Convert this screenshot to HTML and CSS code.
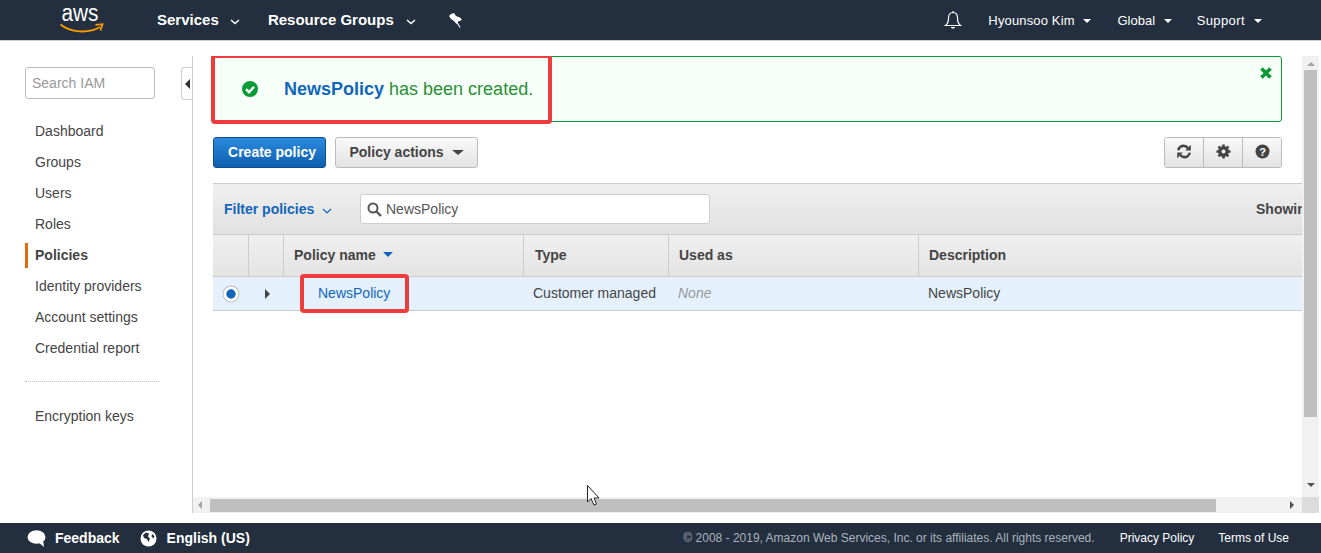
FILE: index.html
```html
<!DOCTYPE html>
<html lang="en">
<head>
<meta charset="utf-8">
<title>IAM Policies</title>
<link rel="stylesheet" href="styles.css">
</head>
<body>
<header class="topbar">
  <svg class="aws-logo" width="44" height="40" viewBox="0 0 44 40"><text x="1.500" y="21" class="aws-word" textLength="37" lengthAdjust="spacingAndGlyphs">aws</text><path d="M0.500 24.500C10 32.500 28 34 40 27" fill="none" stroke="#f90" stroke-width="1.900"/><path d="M35.500 24.800L42.500 24.200L40.500 30.500" fill="none" stroke="#f90" stroke-width="1.800"/></svg>
  <nav class="nav-left">
    <a class="nav-main nav-services">Services <svg class="chev" width="10" height="6" viewBox="0 0 10 6"><path d="M1 1l4 3.500L9 1" fill="none" stroke="#fff" stroke-width="1.500"/></svg></a>
    <a class="nav-main">Resource Groups <svg class="chev" width="10" height="6" viewBox="0 0 10 6"><path d="M1 1l4 3.500L9 1" fill="none" stroke="#fff" stroke-width="1.500"/></svg></a>
    <svg class="pin" width="15" height="15" viewBox="0 0 15 15"><path d="M3 1L6 0L8 3L12 4.500L14 7L10 8.500L8.500 11L6 8L3 6L1 3z" fill="#fff"/><path d="M8.500 8.500L12 14.500" stroke="#fff" stroke-width="1.100"/></svg>
  </nav>
  <nav class="nav-right">
    <svg class="bell" width="18" height="19" viewBox="0 0 18 19"><path d="M9 1.500c-3 0-4.500 2.500-4.500 5.500 0 3-1 6-3 7.500h15c-2-1.500-3-4.500-3-7.500 0-3-1.500-5.500-4.500-5.500z" fill="none" stroke="#fff" stroke-width="1.200"/><path d="M7 16h4c0 2-4 2-4 0z" fill="#fff"/><circle cx="9" cy="1.200" r="1" fill="#fff"/></svg>
    <a class="nav-sub nav-user">Hyounsoo Kim <i class="caret-w"></i></a>
    <a class="nav-sub nav-global">Global <i class="caret-w"></i></a>
    <a class="nav-sub nav-support">Support <i class="caret-w"></i></a>
  </nav>
</header>

<div class="main">
  <aside class="sidebar">
    <div class="search-iam">Search IAM</div>
    <ul class="side-list">
      <li>Dashboard</li>
      <li>Groups</li>
      <li>Users</li>
      <li>Roles</li>
      <li class="active">Policies</li>
      <li>Identity providers</li>
      <li>Account settings</li>
      <li>Credential report</li>
    </ul>
    <div class="side-rule"></div>
    <ul class="side-list">
      <li>Encryption keys</li>
    </ul>
    <div class="collapse-tab"><i></i></div>
  </aside>

  <section class="panel">
    <div class="viewport">
      <div class="flash">
        <svg class="flash-check" width="18" height="18" viewBox="0 0 18 18"><circle cx="9" cy="9" r="8" fill="#0a9b38"/><path d="M5 9.200l3 3 5-5.500" fill="none" stroke="#fff" stroke-width="2.400"/></svg>
        <p class="flash-text"><b>NewsPolicy</b> has been created.</p>
        <svg class="flash-close" width="12" height="12" viewBox="0 0 12 12"><path d="M1.500 1.500l9 9M10.500 1.500l-9 9" stroke="#0a9b38" stroke-width="3.600"/></svg>
      </div>

      <div class="actions">
        <button class="btn btn-primary">Create policy</button>
        <button class="btn btn-secondary">Policy actions <i class="caret-d"></i></button>
        <div class="icon-group">
          <button class="icon-btn"><svg width="16" height="15" viewBox="0 0 16 15"><path d="M2.200 6.200C3 3 6 1.500 8.500 2c1.500.3 2.500 1 3.300 2" fill="none" stroke="#444" stroke-width="2.600"/><path d="M14.800 .8v5.600H9.200z" fill="#444"/><path d="M13.800 8.800C13 12 10 13.500 7.500 13c-1.500-.3-2.500-1-3.300-2" fill="none" stroke="#444" stroke-width="2.600"/><path d="M1.200 14.200V8.600h5.600z" fill="#444"/></svg></button>
          <button class="icon-btn"><svg width="15" height="15" viewBox="0 0 15 15"><circle cx="7.500" cy="7.500" r="3.700" fill="none" stroke="#444" stroke-width="3.400"/><path d="M7.500 0.500v14M0.500 7.500h14M2.500 2.500l10 10M12.500 2.500l-10 10" stroke="#444" stroke-width="2.600" stroke-dasharray="2.500 9 2.500"/></svg></button>
          <button class="icon-btn"><svg width="15" height="15" viewBox="0 0 15 15"><circle cx="7.500" cy="7.500" r="7" fill="#444"/><text x="7.500" y="11.500" class="help-mark">?</text></svg></button>
        </div>
      </div>

      <div class="table-wrap">
        <div class="filter-bar">
          <a class="filter-link">Filter policies <svg class="filter-chev" width="10" height="6" viewBox="0 0 10 6"><path d="M1 1l4 4 4-4" fill="none" stroke="#16b" stroke-width="1.200"/></svg></a>
          <div class="filter-input">
            <svg width="15" height="15" viewBox="0 0 15 15"><circle cx="6" cy="6" r="4.500" fill="none" stroke="#555" stroke-width="2"/><path d="M9.500 9.500l4.500 4.500" stroke="#555" stroke-width="2.400"/></svg>
            <span>NewsPolicy</span>
          </div>
          <span class="showing">Showing 1 result</span>
        </div>
        <div class="row head-row">
          <div class="cell c-radio"></div>
          <div class="cell c-expand"></div>
          <div class="cell c-name">Policy name <i class="caret-blue"></i></div>
          <div class="cell c-type">Type</div>
          <div class="cell c-used">Used as</div>
          <div class="cell c-desc">Description</div>
        </div>
        <div class="row body-row">
          <div class="cell c-radio"><span class="radio"></span></div>
          <div class="cell c-expand"><i class="caret-r"></i></div>
          <div class="cell c-name"><a class="policy-link">NewsPolicy</a></div>
          <div class="cell c-type">Customer managed</div>
          <div class="cell c-used none">None</div>
          <div class="cell c-desc">NewsPolicy</div>
        </div>
      </div>

      <div class="annot annot-flash"></div>
      <div class="annot annot-row"></div>
    </div>

    <div class="vscroll">
      <i class="arrow-up"></i>
      <div class="v-thumb"></div>
      <i class="arrow-down"></i>
    </div>
    <div class="hscroll">
      <i class="arrow-left"></i>
      <div class="h-thumb"></div>
      <i class="arrow-right"></i>
    </div>
    <div class="corner"></div>
    <svg class="cursor" width="13" height="21" viewBox="0 0 13 21"><path d="M0.500 0.500V17L4 13.500L7 20L9.500 19L7 13H12z" fill="#fff" stroke="#222" stroke-width="1"/></svg>
  </section>
</div>

<footer class="footer">
  <a class="foot-item">
    <svg width="20" height="17" viewBox="0 0 20 17"><ellipse cx="9.500" cy="7" rx="9" ry="6.800" fill="#fff"/><path d="M11 12l6 5-1-7z" fill="#fff"/></svg>
    Feedback
  </a>
  <a class="foot-item foot-lang">
    <svg width="17" height="17" viewBox="0 0 17 17"><circle cx="8.500" cy="8.500" r="8" fill="#fff"/><path d="M3 5l3-2.500 3 1-1 3 2 2-1.500 3.500-1.500-3-3-1zM12 4l2.500 2-1 2.500-2-2z" fill="#232f3e"/></svg>
    English (US)
  </a>
  <div class="foot-right">
    <span class="copy">© 2008 - 2019, Amazon Web Services, Inc. or its affiliates. All rights reserved.</span>
    <a class="foot-link">Privacy Policy</a>
    <a class="foot-link">Terms of Use</a>
  </div>
</footer>
</body>
</html>
```

FILE: styles.css
```css
* { box-sizing: border-box; }
html, body { margin: 0; height: 553px; overflow: hidden; }
body {
  display: flex;
  flex-direction: column;
  font-family: "Liberation Sans", Arial, sans-serif;
  font-size: 14px;
  color: #444;
  background: #fff;
}
i { display: inline-block; }
button { font-family: inherit; cursor: pointer; }

/* top bar */
.topbar {
  flex: 0 0 41px;
  display: flex;
  align-items: center;
  padding: 0 59px 0 60px;
  background: #232f3e;
  border-bottom: 1px solid #ccc;
  color: #fff;
}
.aws-logo { flex: none; }
.aws-word { font: 23px "Liberation Sans", Arial, sans-serif; fill: #fff; }
.nav-left { display: flex; align-items: center; margin-left: 53px; }
.nav-main { font-weight: 700; font-size: 15px; margin: 0 28px 2px 0; white-space: nowrap; }
.nav-main .chev { margin-left: 8px; vertical-align: 0; }
.nav-services .chev { margin-left: 7px; }
.pin { margin-left: 4px; }
.nav-right { display: flex; align-items: center; margin-left: auto; }
.bell { margin-right: 26px; }
.nav-sub { font-size: 13px; white-space: nowrap; }
.nav-user { margin-right: 26px; letter-spacing: .15px; }
.nav-global { margin-right: 25px; }
.nav-support { letter-spacing: .4px; }
.caret-w {
  width: 0; height: 0; margin-left: 5px; vertical-align: 2px;
  border-left: 4px solid transparent; border-right: 4px solid transparent; border-top: 4px solid #fff;
}

/* main */
.main { flex: 1; display: flex; min-height: 0; }
.sidebar {
  position: relative;
  flex: 0 0 192px;
  padding: 26px 0 0 25px;
}
.search-iam {
  width: 130px; height: 32px; padding: 0 6px;
  border: 1px solid #bbb; border-radius: 3px;
  line-height: 30px; color: #999; font-size: 14px;
}
.side-list { list-style: none; margin: 0; padding: 0; }
.search-iam + .side-list { margin-top: 17px; }
.side-list li { height: 31px; line-height: 31px; padding-left: 10px; color: #444; font-size: 14px; }
.side-list li.active { font-weight: 700; border-left: 3px solid #dd6b10; padding-left: 7px; height: 25px; line-height: 25px; margin: 3px 0; }
.side-rule { width: 134px; margin: 17px 0 19px; border-top: 1px dotted #bbb; }
.collapse-tab {
  position: absolute; top: 26px; right: -1px;
  width: 12px; height: 33px;
  background: #fff; border: 1px solid #ccc; border-right: 0;
  border-radius: 4px 0 0 4px;
  display: flex; align-items: center; justify-content: center;
}
.collapse-tab i { border-top: 5px solid transparent; border-bottom: 5px solid transparent; border-right: 5px solid #333; }

/* panel and scrollbars */
.panel {
  position: relative;
  flex: 1; min-width: 0;
  margin: 15px 0 10px;
  display: grid;
  grid-template-columns: 1109px 17px 2px;
  grid-template-rows: 441px 16px;
  border-left: 1px solid #ccc;
}
.viewport { position: relative; overflow: hidden; padding: 0 20px; }
.vscroll {
  background: #f1f1f1;
  display: flex; flex-direction: column; align-items: center;
  padding: 0 1px;
}
.v-thumb { width: 13px; height: 347px; background: #bfbfbf; margin: 0 0 auto; }
.arrow-up { margin: 6px 0 4px; border-left: 4px solid transparent; border-right: 4px solid transparent; border-bottom: 4px solid #a3a3a3; }
.arrow-down { margin-bottom: 10px; border-left: 4px solid transparent; border-right: 4px solid transparent; border-top: 4px solid #505050; }
.hscroll {
  grid-column: 1; grid-row: 2;
  background: #f1f1f1;
  display: flex; align-items: center;
  padding: 0 8px 0 5px;
}
.h-thumb { width: 1006px; height: 13px; background: #bfbfbf; margin-left: 8px; }
.arrow-left { border-top: 4px solid transparent; border-bottom: 4px solid transparent; border-right: 4px solid #a3a3a3; }
.arrow-right { margin-left: auto; border-top: 4px solid transparent; border-bottom: 4px solid transparent; border-left: 4px solid #505050; }
.corner { grid-column: 2; grid-row: 2; background: #dcdcdc; }

/* flash */
.flash {
  position: relative;
  width: 1069px; height: 66px;
  display: flex; align-items: center;
  padding-left: 27px;
  background: #f6fff8;
  border: 1px solid #0a9b38;
  border-radius: 3px;
}
.flash-text { margin: 0 0 0 25px; font-size: 18px; color: #2b8f35; }
.flash-text b { color: #1166bb; }
.flash-close { position: absolute; top: 10px; right: 9px; }

/* actions */
.actions { display: flex; align-items: center; margin-top: 15px; height: 31px; width: 1069px; }
.btn { height: 31px; border-radius: 3px; font-weight: 700; font-size: 14px; padding: 0 0 2px; }
.btn-primary {
  width: 113px; padding-left: 5px; color: #fff; border: 1px solid #0f4f91;
  background: linear-gradient(#2b8ae0, #0f5fae);
}
.btn-secondary {
  width: 143px; margin-left: 9px; color: #444; border: 1px solid #bbb;
  background: linear-gradient(#f9f9f9, #e3e3e3);
}
.caret-d { width: 0; height: 0; margin-left: 4px; vertical-align: 2px; border-left: 6px solid transparent; border-right: 6px solid transparent; border-top: 5px solid #444; }
.icon-group { margin-left: auto; display: flex; border: 1px solid #bbb; border-radius: 3px; height: 31px; overflow: hidden; }
.icon-btn {
  width: 39px; padding: 0 0 2px; border: 0; border-left: 1px solid #bbb;
  background: linear-gradient(#f9f9f9, #e3e3e3);
  display: flex; align-items: center; justify-content: center;
}
.icon-btn:first-child { border-left: 0; width: 38px; }
.help-mark { font: 700 11px "Liberation Sans", Arial, sans-serif; fill: #fff; text-anchor: middle; }

/* table */
.table-wrap { margin-top: 15px; width: 1110px; }
.filter-bar {
  height: 52px; display: flex; align-items: center;
  padding: 0 0 0 11px;
  border-top: 1px solid #ccc; border-bottom: 1px solid #ccc;
  background: linear-gradient(#efefef, #e1e1e1);
  white-space: nowrap;
}
.filter-link { width: 136px; flex: none; color: #1166bb; font-weight: 700; font-size: 14px; }
.filter-chev { margin-left: 4px; }
.filter-input {
  flex: none; width: 350px; height: 30px;
  display: flex; align-items: center; gap: 4px;
  padding-left: 6px;
  background: #fff; border: 1px solid #ccc; border-radius: 3px;
  color: #555; font-size: 14px;
}
.showing { margin-left: 546px; font-weight: 700; color: #444; font-size: 14px; }
.row { display: flex; }
.head-row {
  height: 42px; border-bottom: 1px solid #ccc;
  background: linear-gradient(#efefef, #e4e4e4);
  font-weight: 700;
}
.body-row { height: 34px; background: #e4f1fc; border-bottom: 1px solid #ccc; color: #444; }
.cell { display: flex; align-items: center; flex: none; padding-left: 10px; white-space: nowrap; }
.head-row .cell { padding-bottom: 2px; }
.head-row .cell + .cell { border-left: 1px solid #ccc; }
.c-radio { width: 35px; padding-left: 0; justify-content: center; }
.c-expand { width: 35px; padding-left: 0; justify-content: center; }
.c-name { width: 240px; }
.c-type { width: 145px; }
.c-used { width: 250px; }
.c-desc { flex: 1; }
.head-row .c-type { padding-left: 11px; }
.body-row .c-expand { padding-left: 3px; }
.body-row .c-name { padding-left: 35px; padding-bottom: 2px; }
.body-row .c-type, .body-row .c-used, .body-row .c-desc { padding-bottom: 2px; }
.policy-link { color: #1166bb; }
.body-row .none { color: #999; font-style: italic; }
.radio { width: 16px; height: 16px; border-radius: 50%; background: #1166bb; border: 3px solid #fff; box-shadow: 0 0 0 1px #bbb; transform: scale(.94); }
.caret-r { border-top: 5px solid transparent; border-bottom: 5px solid transparent; border-left: 5px solid #444; }
.caret-blue { width: 0; height: 0; margin-left: 7px; border-left: 5px solid transparent; border-right: 5px solid transparent; border-top: 5px solid #1166bb; }

/* overlays */
.annot { position: absolute; border: 4px solid #ee3b3b; border-radius: 4px; pointer-events: none; }
.annot-flash { left: 18px; top: -2px; width: 341px; height: 70px; }
.annot-row { left: 107px; top: 218px; width: 109px; height: 39px; }
.cursor { position: absolute; left: 394px; top: 429px; }

/* footer */
.footer {
  flex: 0 0 30px;
  display: flex; align-items: center;
  padding: 0 32px 0 27px;
  background: #232f3e; color: #fff;
}
.foot-item { display: flex; align-items: center; gap: 8px; font-weight: 700; font-size: 14px; white-space: nowrap; }
.foot-lang { margin-left: 20px; gap: 10px; }
.foot-right { margin-left: auto; display: flex; align-items: center; font-size: 12px; white-space: nowrap; }
.copy { color: #aab2bd; margin-right: 25px; }
.foot-link { color: #fff; margin-right: 24px; }
.foot-link:last-child { margin-right: 0; }
```
